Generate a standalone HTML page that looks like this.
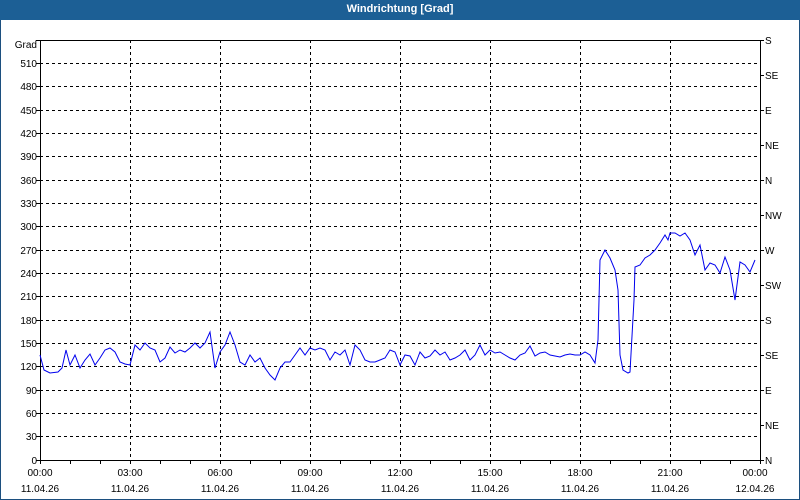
<!DOCTYPE html>
<html><head><meta charset="utf-8"><style>
html,body{margin:0;padding:0;background:#fff}
body{width:800px;height:500px;overflow:hidden;position:relative;font-family:"Liberation Sans",sans-serif}
.frame{position:absolute;left:0;top:0;width:798px;height:498px;border:1px solid #1c4f7f}
.title{position:absolute;left:0;top:0;width:800px;height:20px;background:#1c5f95;color:#fff;font-weight:bold;font-size:11px;text-align:center;line-height:18px}
svg text{font-family:"Liberation Sans",sans-serif;font-size:10px;fill:#000}
</style></head><body>
<div class="frame"></div>
<div class="title">Windrichtung [Grad]</div>
<svg width="800" height="500" style="position:absolute;left:0;top:0">
<g stroke="#000" stroke-dasharray="3,3" stroke-width="1" shape-rendering="crispEdges">
<line x1="40" x2="760" y1="63.5" y2="63.5"/><line x1="40" x2="760" y1="86.5" y2="86.5"/><line x1="40" x2="760" y1="110.5" y2="110.5"/><line x1="40" x2="760" y1="133.5" y2="133.5"/><line x1="40" x2="760" y1="156.5" y2="156.5"/><line x1="40" x2="760" y1="180.5" y2="180.5"/><line x1="40" x2="760" y1="203.5" y2="203.5"/><line x1="40" x2="760" y1="226.5" y2="226.5"/><line x1="40" x2="760" y1="250.5" y2="250.5"/><line x1="40" x2="760" y1="273.5" y2="273.5"/><line x1="40" x2="760" y1="296.5" y2="296.5"/><line x1="40" x2="760" y1="320.5" y2="320.5"/><line x1="40" x2="760" y1="343.5" y2="343.5"/><line x1="40" x2="760" y1="366.5" y2="366.5"/><line x1="40" x2="760" y1="390.5" y2="390.5"/><line x1="40" x2="760" y1="413.5" y2="413.5"/><line x1="40" x2="760" y1="436.5" y2="436.5"/>
<line x1="130.5" x2="130.5" y1="40" y2="460"/><line x1="220.5" x2="220.5" y1="40" y2="460"/><line x1="310.5" x2="310.5" y1="40" y2="460"/><line x1="400.5" x2="400.5" y1="40" y2="460"/><line x1="490.5" x2="490.5" y1="40" y2="460"/><line x1="580.5" x2="580.5" y1="40" y2="460"/><line x1="670.5" x2="670.5" y1="40" y2="460"/>
</g>
<rect x="40.5" y="40.5" width="720" height="420" fill="none" stroke="#000" shape-rendering="crispEdges"/>
<g stroke="#000" shape-rendering="crispEdges">
<path d="M40.5 460v4M70.5 460v4M100.5 460v4M130.5 460v4M160.5 460v4M190.5 460v4M220.5 460v4M250.5 460v4M280.5 460v4M310.5 460v4M340.5 460v4M370.5 460v4M400.5 460v4M430.5 460v4M460.5 460v4M490.5 460v4M520.5 460v4M550.5 460v4M580.5 460v4M610.5 460v4M640.5 460v4M670.5 460v4M700.5 460v4M730.5 460v4M760.5 460v4"/>
<path d="M36 40.5h4M36 63.5h4M36 86.5h4M36 110.5h4M36 133.5h4M36 156.5h4M36 180.5h4M36 203.5h4M36 226.5h4M36 250.5h4M36 273.5h4M36 296.5h4M36 320.5h4M36 343.5h4M36 366.5h4M36 390.5h4M36 413.5h4M36 436.5h4M36 460.5h4"/>
<path d="M760 40.5h4M760 75.5h4M760 110.5h4M760 145.5h4M760 180.5h4M760 215.5h4M760 250.5h4M760 285.5h4M760 320.5h4M760 355.5h4M760 390.5h4M760 425.5h4M760 460.5h4"/>
</g>
<g text-anchor="end">
<text x="37" y="48">Grad</text><text x="37" y="67">510</text><text x="37" y="90">480</text><text x="37" y="114">450</text><text x="37" y="137">420</text><text x="37" y="160">390</text><text x="37" y="184">360</text><text x="37" y="207">330</text><text x="37" y="230">300</text><text x="37" y="254">270</text><text x="37" y="277">240</text><text x="37" y="300">210</text><text x="37" y="324">180</text><text x="37" y="347">150</text><text x="37" y="370">120</text><text x="37" y="394">90</text><text x="37" y="417">60</text><text x="37" y="440">30</text><text x="37" y="464">0</text>
</g>
<g>
<text x="765" y="44">S</text><text x="765" y="79">SE</text><text x="765" y="114">E</text><text x="765" y="149">NE</text><text x="765" y="184">N</text><text x="765" y="219">NW</text><text x="765" y="254">W</text><text x="765" y="289">SW</text><text x="765" y="324">S</text><text x="765" y="359">SE</text><text x="765" y="394">E</text><text x="765" y="429">NE</text><text x="765" y="464">N</text>
</g>
<g text-anchor="middle">
<text x="40" y="476">00:00</text><text x="130" y="476">03:00</text><text x="220" y="476">06:00</text><text x="310" y="476">09:00</text><text x="400" y="476">12:00</text><text x="490" y="476">15:00</text><text x="580" y="476">18:00</text><text x="670" y="476">21:00</text><text x="755" y="476">00:00</text>
<text x="40" y="492">11.04.26</text><text x="130" y="492">11.04.26</text><text x="220" y="492">11.04.26</text><text x="310" y="492">11.04.26</text><text x="400" y="492">11.04.26</text><text x="490" y="492">11.04.26</text><text x="580" y="492">11.04.26</text><text x="670" y="492">11.04.26</text><text x="755" y="492">12.04.26</text>
</g>
<polyline fill="none" stroke="#0000ee" stroke-width="1" points="40,355 44,370 50,373 58,372 62,368 66,350 70,365 75,355 80,368 85,360 90,354 95,365 100,358 105,350 110,348 115,352 120,362 125,364 130,365 135,345 140,350 145,343 150,348 155,350 160,362 165,358 170,347 175,353 180,350 185,352 190,348 195,343 200,348 205,343 210,332 215,368 220,352 225,345 230,332 235,345 240,362 245,365 250,355 255,362 260,358 265,368 270,375 275,380 280,368 285,362 290,362 295,355 300,348 305,355 310,348 315,350 320,348 325,350 330,360 335,352 340,355 345,350 350,365 355,345 360,350 365,360 370,362 375,362 380,360 385,358 390,350 395,352 400,365 405,355 410,356 415,365 420,352 425,358 430,356 435,350 440,355 445,352 450,360 455,358 460,355 465,350 470,360 475,355 480,345 485,355 490,350 495,353 500,352 505,355 510,358 515,360 520,355 525,353 530,346 535,356 540,353 545,352 550,355 555,356 560,357 565,355 570,354 575,355 580,355 585,352 590,355 595,363 598,340 600,260 605,250 610,258 615,270 618,290 620,355 623,370 628,373 630,372 634,300 635,267 640,265 645,258 650,255 655,250 660,243 665,235 668,240 670,233 675,233 680,236 685,233 690,240 695,255 700,245 705,270 710,263 715,265 720,273 725,257 730,270 735,300 740,262 745,265 750,272 755,260"/>
</svg>
</body></html>
